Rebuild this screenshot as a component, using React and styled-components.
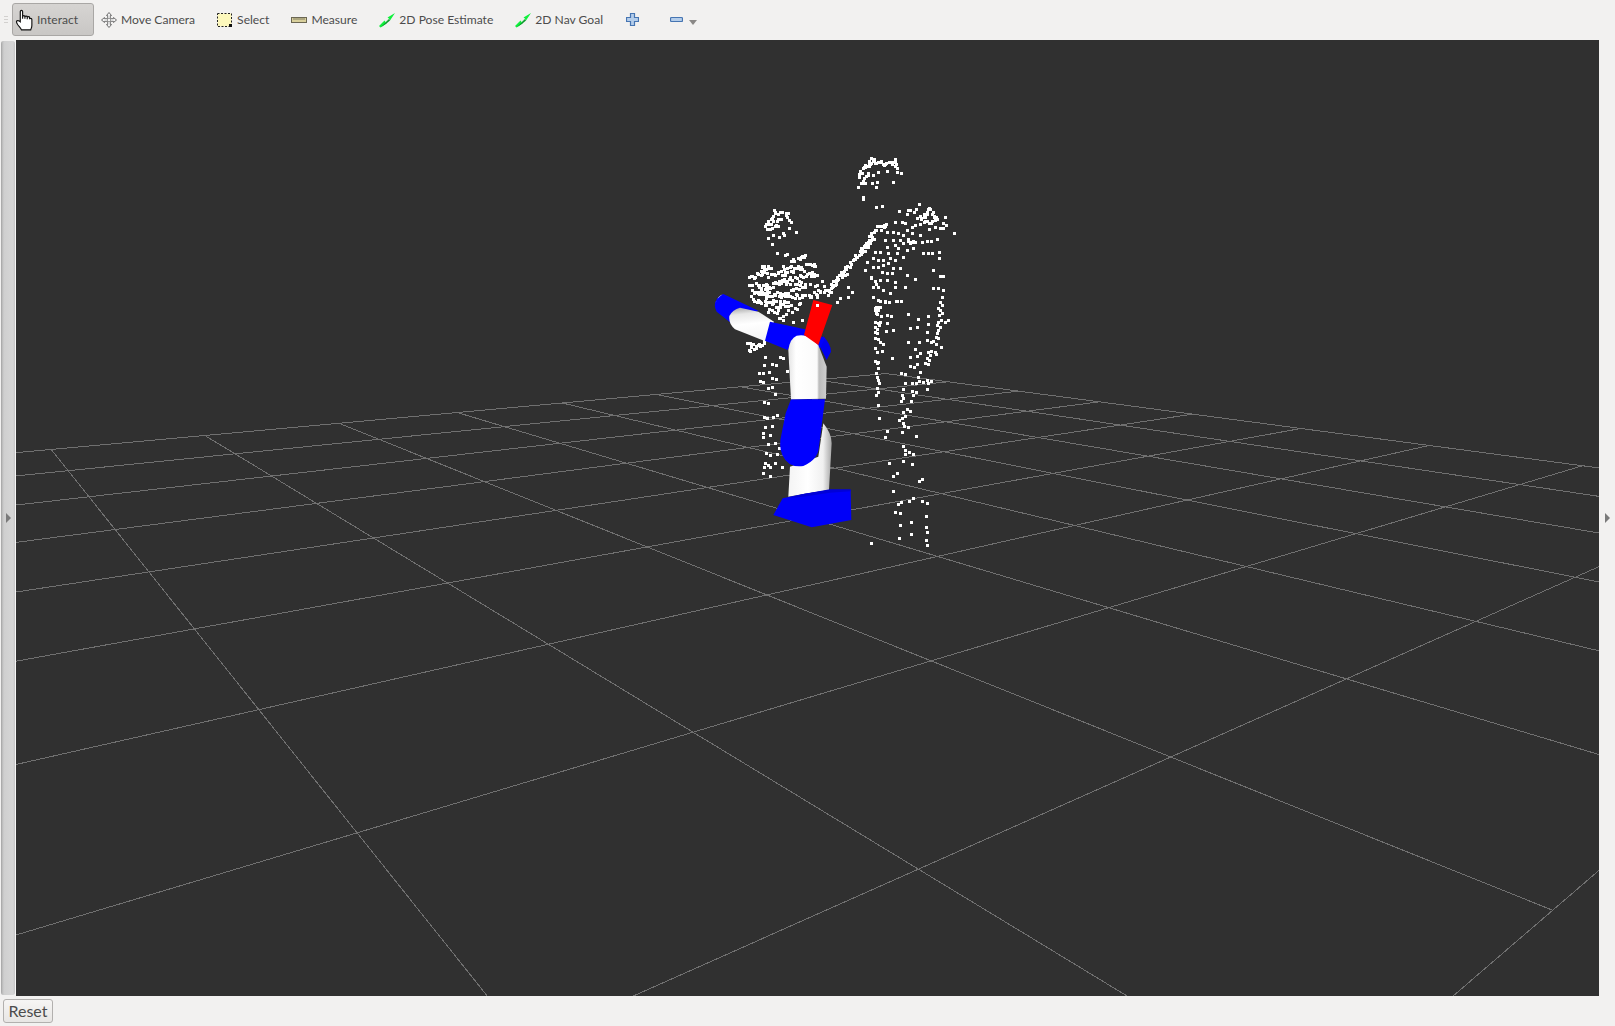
import React from 'react';
import styled, { createGlobalStyle } from 'styled-components';

const GlobalStyle = createGlobalStyle`
    html, body {
        margin: 0;
        padding: 0;
        height: 100%;
        overflow: hidden;
        background: #f2f1f0;
    }
    #root {
        height: 100%;
    }
`;

const Page = styled.div`
    display: flex;
    flex-direction: column;
    height: 1026px;
    font-family: Lato, 'Noto Sans', sans-serif;
    color: #4c4c4c;
`;

const Toolbar = styled.div`
    display: flex;
    align-items: center;
    height: 40px;
    flex: none;
    box-sizing: border-box;
    padding: 0 0 1px 4px;
    background: #f2f1f0;
`;

const Grip = styled.div`
    width: 4px;
    height: 8px;
    margin-right: 4px;
    background: repeating-linear-gradient(#d2d0ce 0 1px, transparent 1px 3px);
`;

const Tool = styled.div`
    display: flex;
    align-items: center;
    gap: 4px;
    height: 33px;
    box-sizing: border-box;
    font-size: 12.1px;
    margin-right: ${p => p.$after ?? 20}px;
    padding: ${p => (p.$active ? '0 15px 0 4px' : '0')};
    border-radius: 3px;
    border: ${p => (p.$active ? '1px solid #a9a7a5' : '1px solid transparent')};
    background: ${p => (p.$active ? 'linear-gradient(#d6d4d2, #c9c7c5)' : 'none')};
`;

const IconSlot = styled.span`
    display: flex;
    align-items: center;
    justify-content: center;
    width: 16px;
    height: 18px;
    flex: none;
`;

const HandSvg = styled.svg`
    flex: none;
`;

const Caret = styled.span`
    width: 0;
    height: 0;
    margin: 5px 0 0 -16px;
    border-left: 4px solid transparent;
    border-right: 4px solid transparent;
    border-top: 5px solid #8a8886;
`;

const Middle = styled.div`
    display: flex;
    flex: 1;
    min-height: 0;
`;

const LeftHandle = styled.div`
    width: 16px;
    flex: none;
    box-sizing: border-box;
    margin: 1px 0;
    border-left: 1px solid #f2f1f0;
    border-right: 1px solid #f7f7f7;
    display: flex;
    align-items: center;
    justify-content: center;
    background: linear-gradient(90deg, #9e9e9e 0, #b8b8b8 1px, #cfcfcf 3px, #d6d6d6 12px, #c4c4c4 14px);
    border-radius: 3px;
`;

const ArrowMark = styled.span`
    width: 0;
    height: 0;
    border-top: 5px solid transparent;
    border-bottom: 5px solid transparent;
    border-left: 5px solid #7a7a7a;
`;

const Viewport = styled.div`
    flex: 1;
    min-width: 0;
    background: #303030;
    line-height: 0;
`;

const RightRail = styled.div`
    width: 16px;
    flex: none;
    display: flex;
    align-items: center;
    justify-content: center;
    background: #f2f1f0;
`;

const Footer = styled.div`
    display: flex;
    align-items: center;
    height: 30px;
    flex: none;
    box-sizing: border-box;
    padding: 0 0 1px 3px;
    background: #f2f1f0;
`;

const ResetButton = styled.button`
    width: 50px;
    height: 24px;
    padding: 0;
    font-family: inherit;
    font-size: 16px;
    color: #4c4c4c;
    border: 1px solid #b2b0ae;
    border-radius: 3px;
    background: linear-gradient(#f6f5f4, #e8e6e4);
`;

const GridLines = styled.g`
    stroke: #707070;
    stroke-width: 1;
    shape-rendering: crispEdges;
`;

const Cloud = styled.g`
    fill: #ffffff;
    shape-rendering: crispEdges;
`;

// floor grid crossings read off the picture: [i, j, x, y]
const SCALE = 1615 / 1568;
const ANCHORS = [
    [0, -6, 51, 449.3],
    [1, -6, 204.3, 435],
    [2, -6, 339.3, 423.3],
    [0, -5, 68.3, 470.7],
    [1, -5, 235, 454],
    [2, -5, 379.3, 439.3],
    [0, -4, 88.7, 496.7],
    [1, -4, 272, 476.7],
    [2, -4, 427.7, 459],
    [0, -3, 114.7, 529.3],
    [1, -3, 316, 503.3],
    [2, -3, 484.3, 481.7],
    [0, -2, 149.3, 571.7],
    [1, -2, 372.7, 537.7],
    [1, -1, 447.7, 583.3],
    [8, -1, 1300, 428.3],
    [7, -1, 1230, 441],
    [6, 0, 1280, 478.7],
    [7, 0, 1360, 460.7],
    [8, 0, 1430, 445.7],
    [4, 1, 1246.7, 566.7],
    [5, 1, 1356, 534],
    [6, 1, 1445, 506.7],
    [7, 1, 1520, 484.7],
    [8, 1, 1583.3, 465.7],
    [5, 2, 1575, 577.3],
    [0, 0, 250 * SCALE, 688 * SCALE],
    [1, 0, 533 * SCALE, 627 * SCALE],
    [0, 1, 348 * SCALE, 808 * SCALE],
    [1, 1, 672 * SCALE, 710 * SCALE],
    [2, 1, 905 * SCALE, 642 * SCALE],
    [1, 2, 892 * SCALE, 843 * SCALE],
    [2, 2, 1137 * SCALE, 735 * SCALE],
    [3, 2, 1307 * SCALE, 660 * SCALE],
    [4, 2, 1433 * SCALE, 603 * SCALE],
    [2, 3, 1507 * SCALE, 884 * SCALE],
];

function fitHomography(points) {
    const n = 8;
    const a = Array.from({ length: n }, () => new Array(n + 1).fill(0));
    const add = (row, rhs) => {
        for (let r = 0; r < n; r++) {
            for (let c = 0; c < n; c++) a[r][c] += row[r] * row[c];
            a[r][n] += row[r] * rhs;
        }
    };
    points.forEach(([i, j, x, y]) => {
        add([i, j, 1, 0, 0, 0, -i * x, -j * x], x);
        add([0, 0, 0, i, j, 1, -i * y, -j * y], y);
    });
    for (let p = 0; p < n; p++) {
        let best = p;
        for (let r = p + 1; r < n; r++) if (Math.abs(a[r][p]) > Math.abs(a[best][p])) best = r;
        [a[p], a[best]] = [a[best], a[p]];
        for (let r = 0; r < n; r++) {
            if (r === p) continue;
            const f = a[r][p] / a[p][p];
            for (let c = p; c <= n; c++) a[r][c] -= f * a[p][c];
        }
    }
    return a.map((row, k) => row[n] / row[k]);
}

const H = fitHomography(ANCHORS);
const project = (i, j) => {
    const w = H[6] * i + H[7] * j + 1;
    return [(H[0] * i + H[1] * j + H[2]) / w, (H[3] * i + H[4] * j + H[5]) / w];
};

const I_MIN = -1;
const I_MAX = 8;
const J_MIN = -6;
const J_MAX = 3;

const gridSegments = [];
for (let i = 0; i <= I_MAX; i++) gridSegments.push([project(i, J_MIN), project(i, J_MAX)]);
for (let j = J_MIN; j <= J_MAX; j++) gridSegments.push([project(I_MIN, j), project(I_MAX, j)]);

// point cloud, in 3x zoom crops: dots are [x, y], strokes are [x1, y1, x2, y2, count]
const CROPS = [
    {
        origin: [730, 140],
        dots: [
            [415, 100], [430, 105], [445, 95], [470, 92], [500, 95], [512, 98], [490, 125], [440, 125], [425, 130], [405, 130],
            [385, 140], [438, 140], [398, 172], [400, 178], [437, 202], [455, 197], [508, 212], [568, 193], [645, 230], [640, 250],
            [648, 255], [672, 278], [615, 262], [596, 268], [630, 265], [640, 265], [525, 250], [515, 245], [495, 245], [545, 260],
            [530, 270], [555, 255], [470, 275], [490, 275], [505, 280], [520, 285], [545, 280], [570, 285], [465, 300], [490, 300],
            [510, 300], [575, 305], [590, 302], [602, 302], [620, 298], [470, 320], [495, 315], [520, 310], [540, 308], [550, 325],
            [530, 330], [505, 325], [435, 335], [450, 335], [475, 340], [500, 340], [520, 350], [578, 340], [595, 338], [607, 340],
            [627, 335], [627, 355], [430, 355], [445, 360], [460, 360], [480, 355], [495, 360], [410, 365], [430, 380], [445, 380],
            [460, 375], [475, 370], [490, 385], [510, 385], [405, 390], [455, 395], [470, 398], [485, 398], [610, 390], [530, 405],
            [630, 408], [640, 408], [450, 420], [470, 420], [495, 425], [555, 418], [430, 440], [445, 440], [460, 450], [480, 460],
            [495, 440], [525, 440], [610, 445], [625, 445], [640, 450], [635, 470], [430, 470], [445, 480], [465, 485], [497, 483],
            [512, 483], [630, 485], [625, 505], [197, 277], [178, 265], [128, 285], [115, 295], [125, 312], [140, 340], [165, 345],
            [172, 342], [190, 545], [215, 540], [260, 470], [275, 422], [320, 485], [330, 475], [355, 470], [365, 455], [355, 440],
            [345, 405],
        ],
        strokes: [
            [385, 105, 400, 80, 6], [400, 80, 435, 62, 12], [420, 60, 460, 70, 12], [460, 80, 495, 62, 9], [490, 60, 500, 85, 5],
            [395, 130, 410, 100, 6], [530, 218, 560, 210, 5], [565, 240, 600, 210, 11], [600, 210, 620, 235, 8], [575, 245, 610, 245, 8],
            [440, 265, 470, 258, 9], [440, 270, 380, 350, 18], [430, 290, 395, 340, 12], [380, 350, 300, 440, 22], [350, 390, 290, 460, 16],
            [530, 300, 555, 305, 6], [425, 405, 435, 430, 4], [435, 500, 445, 520, 4],
            [105, 265, 125, 225, 6], [130, 215, 170, 225, 8], [170, 225, 185, 250, 4], [110, 262, 145, 255, 7], [125, 240, 155, 240, 5],
            [150, 290, 165, 280, 3],
            [90, 385, 120, 380, 9], [185, 365, 230, 350, 10], [160, 385, 260, 375, 18], [60, 412, 110, 400, 11], [120, 405, 190, 395, 14],
            [210, 390, 255, 398, 7], [75, 435, 130, 440, 11], [130, 425, 225, 408, 18], [240, 405, 260, 400, 4], [65, 465, 120, 450, 10],
            [130, 430, 210, 430, 14], [90, 460, 170, 470, 16], [180, 450, 235, 435, 10], [140, 455, 190, 470, 10], [70, 475, 120, 490, 9],
            [130, 480, 175, 490, 9], [180, 470, 240, 465, 10], [240, 465, 300, 450, 11], [250, 440, 280, 445, 4], [120, 510, 180, 490, 9],
            [190, 505, 215, 495, 4], [150, 530, 185, 510, 5],
        ],
    },
    {
        origin: [830, 300],
        dots: [
            [150, 3], [165, 3], [178, 7], [200, 3], [212, 3], [140, 20], [150, 20], [135, 30], [145, 30], [138, 40], [152, 48],
            [135, 65], [145, 68], [150, 65], [135, 80], [148, 75], [140, 88], [135, 95], [142, 100], [135, 115], [145, 118], [150, 125],
            [160, 133], [135, 145], [142, 155], [157, 152], [135, 182], [145, 185], [140, 190], [143, 203], [137, 218], [140, 230],
            [143, 240], [148, 250], [142, 265], [145, 277], [137, 284], [145, 316], [148, 355], [170, 394], [164, 412], [178, 490],
            [200, 520], [190, 528], [190, 574], [204, 613], [214, 606], [196, 636], [211, 640], [211, 676], [208, 713], [124, 730],
            [172, 45], [184, 47], [235, 43], [265, 58], [293, 48], [170, 70], [188, 90], [169, 94], [241, 85], [262, 82], [293, 72],
            [292, 97], [235, 127], [268, 127], [290, 120], [255, 148], [270, 160], [262, 167], [241, 172], [187, 175], [240, 198],
            [252, 200], [262, 193], [270, 216], [214, 220], [226, 223], [265, 232], [224, 250], [247, 248], [258, 248], [268, 244],
            [280, 247], [290, 240], [304, 242], [295, 250], [220, 268], [290, 268], [245, 273], [258, 277], [215, 285], [248, 286],
            [218, 295], [212, 303], [243, 303], [230, 328], [240, 332], [220, 337], [224, 347], [215, 355], [207, 361], [218, 368],
            [223, 377], [235, 381], [217, 397], [257, 408], [220, 438], [224, 450], [236, 457], [226, 463], [250, 461], [220, 484],
            [247, 493], [277, 537], [268, 544], [248, 595], [238, 603], [275, 603], [292, 610], [289, 647], [244, 666], [288, 682],
            [292, 697], [244, 703], [287, 721], [292, 734], [330, 5], [335, 15], [330, 30], [335, 40], [328, 45], [332, 60], [325, 65],
            [355, 60], [345, 65], [322, 75], [330, 80], [325, 90], [322, 100], [318, 112], [325, 115], [310, 122], [303, 125],
            [318, 132], [332, 140], [303, 152], [295, 155], [315, 155], [318, 162], [300, 165], [290, 175], [297, 180], [285, 190],
            [295, 193],
        ],
        strokes: [],
    },
    {
        origin: [690, 270],
        dots: [
            [225, 262], [270, 262], [278, 265], [245, 283], [258, 285], [222, 285], [292, 302], [236, 305], [220, 308], [208, 308],
            [245, 325], [258, 328], [210, 332], [220, 335], [245, 350], [235, 355], [256, 372], [222, 396], [233, 400], [260, 435],
            [250, 442], [222, 441], [232, 445], [225, 470], [247, 468], [220, 490], [240, 495], [220, 500], [235, 522], [255, 520],
            [268, 535], [228, 550], [240, 555], [262, 552], [255, 580], [225, 580], [235, 585], [222, 590], [240, 592], [275, 590],
            [220, 610], [240, 618],
        ],
        strokes: [
            [175, 40, 240, 55, 8], [190, 60, 230, 80, 6], [200, 95, 260, 105, 7], [240, 125, 280, 145, 5], [175, 240, 225, 215, 12],
            [170, 215, 190, 225, 4],
        ],
    },
];

function buildCloud() {
    let seed = 17;
    const jitter = () => {
        seed = (seed * 16807) % 2147483647;
        return (seed % 1000) / 1000 - 0.5;
    };
    const out = [];
    CROPS.forEach(({ origin, dots, strokes }) => {
        const put = (x, y) => out.push([Math.round(origin[0] + x / 3 - 1), Math.round(origin[1] + y / 3 - 1)]);
        dots.forEach(([x, y]) => put(x, y));
        strokes.forEach(([x1, y1, x2, y2, count]) => {
            for (let k = 0; k < count; k++) {
                const t = count > 1 ? k / (count - 1) : 0;
                put(x1 + (x2 - x1) * t + jitter() * 10, y1 + (y2 - y1) * t + jitter() * 14);
            }
        });
    });
    return out;
}

const cloud = buildCloud();

const FloorGrid = () => (
    <GridLines>
        {gridSegments.map(([a, b], k) => (
            <line key={k} x1={a[0]} y1={a[1]} x2={b[0]} y2={b[1]} />
        ))}
    </GridLines>
);

const PointCloud = () => (
    <Cloud>
        {cloud.map(([x, y], k) => (
            <rect key={k} x={x} y={y} width="3" height="3" />
        ))}
    </Cloud>
);

// robot arm, coordinates are those of the 3x crop at (690, 270)
const RobotArm = () => (
    <g transform="translate(690 270) scale(0.3333)">
        <defs>
            <linearGradient id="lowerLink" x1="0" x2="1" y1="0" y2="0">
                <stop offset="0" stopColor="#f4f4f4" />
                <stop offset="0.45" stopColor="#ffffff" />
                <stop offset="0.8" stopColor="#f0f0f0" />
                <stop offset="1" stopColor="#a8a8a8" />
            </linearGradient>
            <linearGradient id="upperLink" x1="0" x2="1" y1="0" y2="0">
                <stop offset="0" stopColor="#e4e4e4" />
                <stop offset="0.2" stopColor="#ffffff" />
                <stop offset="0.75" stopColor="#fafafa" />
                <stop offset="0.8" stopColor="#bcbcbc" />
                <stop offset="1" stopColor="#cfcfcf" />
            </linearGradient>
            <linearGradient id="foreLink" x1="0.2" x2="0.33" y1="0" y2="1">
                <stop offset="0" stopColor="#a8a8a8" />
                <stop offset="0.2" stopColor="#e8e8e8" />
                <stop offset="0.5" stopColor="#ffffff" />
                <stop offset="1" stopColor="#f4f4f4" />
            </linearGradient>
        </defs>
        <path d="M400 198 Q424 225 423 245 L410 270 L390 230 Z" fill="#0000f0" />
        <path d="M295 680 L300 590 L385 560 L400 460 Q425 490 425 520 L417 660 L340 672 Z" fill="url(#lowerLink)" />
        <path d="M303 388 L405 388 L387 530 Q385 568 340 588 Q295 595 277 555 Q265 530 275 490 L287 430 Z" fill="#0000ff" />
        <path d="M250 735 L278 685 L340 672 L420 660 L482 660 L484 750 L365 772 Z" fill="#0000f8" />
        <path d="M296 684 L340 672 L420 658 L482 658 L482 664 L420 668 L340 680 Z" fill="#0000d8" />
        <path d="M100 72 L205 122 L122 158 L80 125 Q68 105 82 85 Q90 74 100 72 Z" fill="#0000ff" />
        <path d="M98 73 Q84 78 76 100 Q80 85 98 73 Z" fill="#ffffff" />
        <path d="M150 113 L205 125 L252 155 L228 215 L135 178 Q115 160 118 138 Q128 118 150 113 Z" fill="url(#foreLink)" />
        <path d="M240 155 L345 178 L405 205 L390 235 L300 225 L293 240 L225 212 Z" fill="#0000ff" />
        <path d="M303 388 L295 240 Q300 205 320 197 Q345 192 362 205 L385 225 L410 290 L408 386 Z" fill="url(#upperLink)" />
        <polygon points="370,90 427,105 385,225 342,195" fill="#ff0000" />
    </g>
);

const Scene = () => (
    <svg width="1583" height="956" viewBox="16 40 1583 956">
        <FloorGrid />
        <PointCloud />
        <RobotArm />
        <rect x="816" y="304" width="3" height="3" fill="#ffffff" />
    </svg>
);

const HandIcon = () => (
    <HandSvg width="21" height="22" viewBox="0 0 18 19">
        <path
            d="M4.5 11V2.2C4.5.9 6.5.9 6.5 2.2V8.5V6.6C6.5 5.5 8.5 5.5 8.5 6.6V8.5V6.9C8.5 5.9 10.5 5.9 10.5 6.9V8.8V7.4C10.5 6.4 12.5 6.4 12.5 7.4V8.8C12.5 7.9 14.5 7.9 14.5 9V14C14.5 16 13.8 17 13.5 18H5.5C5 16.5 3.8 15.5 2.5 13.8C1.5 12.4 1 11.5 1.2 10.7C1.6 9.6 3.2 9.9 4.5 11Z"
            fill="#ffffff"
            stroke="#111111"
            strokeWidth="1"
        />
    </HandSvg>
);

const MoveCameraIcon = () => (
    <svg width="16" height="16" viewBox="0 0 16 16">
        <path
            d="M8 .5 10.5 3.5H9.3V6.7H12.5V5.5L15.5 8 12.5 10.5V9.3H9.3V12.5H10.5L8 15.5 5.5 12.5H6.7V9.3H3.5V10.5L.5 8 3.5 5.5V6.7H6.7V3.5H5.5Z"
            fill="#f4f4f4"
            stroke="#6f6f6f"
            strokeWidth="1"
        />
        <path d="M5 6.5h6M5 9.5h6M6.5 5v6M9.5 5v6" stroke="#8c8c8c" strokeWidth="0.8" />
    </svg>
);

const SelectIcon = () => (
    <svg width="16" height="16" viewBox="0 0 16 16">
        <rect x="0.5" y="1.5" width="14" height="13" fill="#fdf8bc" stroke="#222" strokeDasharray="2 1.5" />
        <rect x="12" y="12" width="3" height="3" fill="#111" />
    </svg>
);

const MeasureIcon = () => (
    <svg width="16" height="16" viewBox="0 0 16 16">
        <rect x="0.5" y="5.5" width="15" height="5" fill="#d9d09c" stroke="#6b6753" />
        <path d="M3 6v2M5 6v2M7 6v2M9 6v2M11 6v2M13 6v2" stroke="#6b6753" strokeWidth="0.8" />
    </svg>
);

const GreenArrowIcon = () => (
    <svg width="16" height="16" viewBox="0 0 16 16">
        <path d="M0 14 5.5 8.5 6.5 10 10 6.5 8.5 5.5 16 1 11 8.5 10 6.8 6.5 10.5 7.5 11.5 1.5 15.5Z" fill="#10f03c" />
        <path d="M1.5 15.5 6.5 10.5 10 7 11 8.5 7.5 11.5Z" fill="#0c9a2c" />
    </svg>
);

const PlusIcon = () => (
    <svg width="13" height="13" viewBox="0 0 13 13">
        <path d="M4.5 .5h4v4h4v4h-4v4h-4v-4h-4v-4h4Z" fill="#b4cdea" stroke="#4675b2" strokeWidth="1.2" />
    </svg>
);

const MinusIcon = () => (
    <svg width="13" height="13" viewBox="0 0 13 13">
        <rect x="0.5" y="4.5" width="12" height="4" rx="1" fill="#b4cdea" stroke="#4675b2" strokeWidth="1.2" />
    </svg>
);

const TOOLS = [
    { label: 'Move Camera', icon: <MoveCameraIcon /> },
    { label: 'Select', icon: <SelectIcon /> },
    { label: 'Measure', icon: <MeasureIcon /> },
    { label: '2D Pose Estimate', icon: <GreenArrowIcon /> },
    { label: '2D Nav Goal', icon: <GreenArrowIcon />, after: 19 },
];

const App = () => (
    <Page>
        <GlobalStyle />
        <Toolbar>
            <Grip />
            <Tool $active $after={6}>
                <IconSlot>
                    <HandIcon />
                </IconSlot>
                Interact
            </Tool>
            {TOOLS.map(tool => (
                <Tool key={tool.label} $after={tool.after}>
                    <IconSlot>{tool.icon}</IconSlot>
                    {tool.label}
                </Tool>
            ))}
            <Tool $after={26}>
                <IconSlot>
                    <PlusIcon />
                </IconSlot>
            </Tool>
            <Tool>
                <IconSlot>
                    <MinusIcon />
                </IconSlot>
            </Tool>
            <Caret />
        </Toolbar>
        <Middle>
            <LeftHandle>
                <ArrowMark />
            </LeftHandle>
            <Viewport>
                <Scene />
            </Viewport>
            <RightRail>
                <ArrowMark />
            </RightRail>
        </Middle>
        <Footer>
            <ResetButton>Reset</ResetButton>
        </Footer>
    </Page>
);

export default App;
